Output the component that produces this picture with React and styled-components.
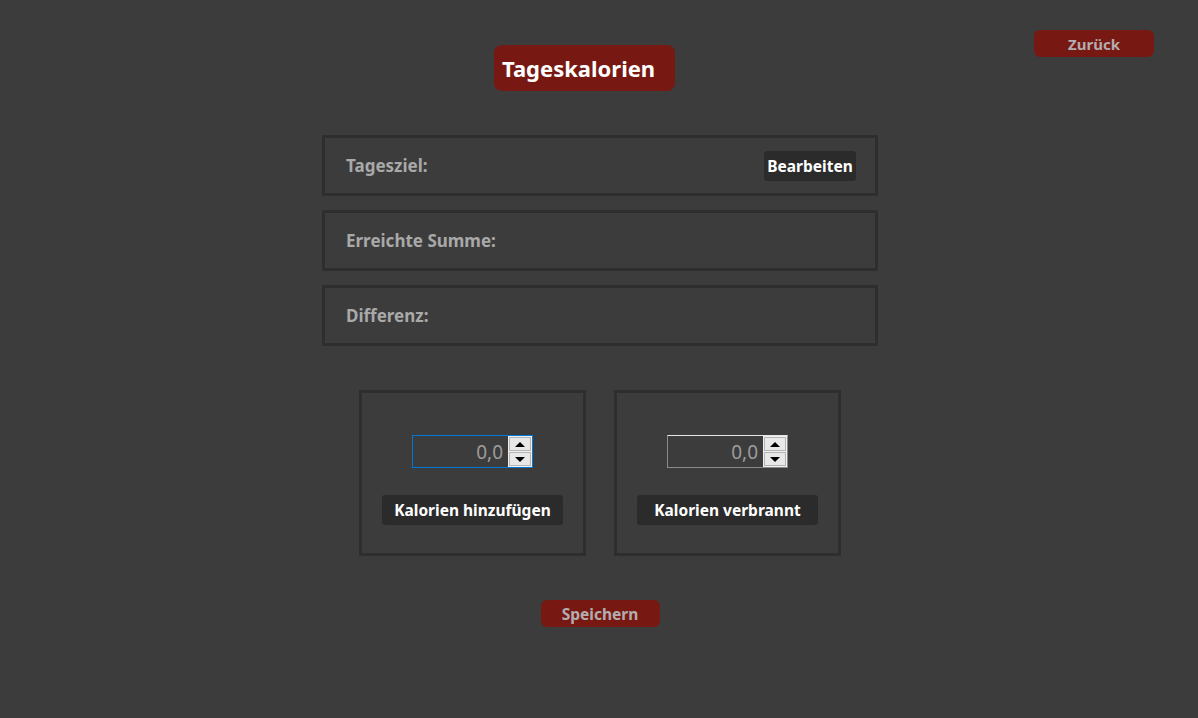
import React from 'react'
import styled, { createGlobalStyle } from 'styled-components'

const Global = createGlobalStyle`
  html, body {
    margin: 0;
    padding: 0;
    background: #3c3c3c;
  }
  body {
    font-family: "Noto Sans", "DejaVu Sans", sans-serif;
  }
`

const Page = styled.div`
  min-height: 718px;
  padding: 30px 0 0 2px;
  box-sizing: border-box;
  display: flex;
  flex-direction: column;
  align-items: center;
`

const Header = styled.div`
  width: 100%;
  display: grid;
  grid-template-columns: 1fr auto 1fr;
  align-items: start;
`

const Title = styled.h1`
  grid-column: 2;
  margin: 15px 31px 0 0;
  width: 181px;
  height: 46px;
  box-sizing: border-box;
  padding-left: 8px;
  display: flex;
  align-items: center;
  background: #771912;
  border-radius: 8px;
  color: #ffffff;
  font-size: 22px;
  font-weight: 700;
`

const RedButton = styled.button`
  width: 120px;
  height: 27px;
  border: none;
  border-radius: 6px;
  background: #771912;
  color: #b3acb0;
  font-family: inherit;
  font-size: 15px;
  font-weight: 700;
  padding: 0;
  cursor: pointer;
`

const BackButton = styled(RedButton)`
  grid-column: 3;
  justify-self: end;
  margin-right: 44px;
`

const InfoList = styled.div`
  margin-top: 44px;
  display: flex;
  flex-direction: column;
  gap: 14px;
`

const InfoBox = styled.div`
  width: 556px;
  height: 61px;
  box-sizing: border-box;
  border: 3px solid #2e2e2e;
  padding: 0 19px 0 21px;
  display: flex;
  align-items: center;
  justify-content: space-between;
`

const Label = styled.span`
  color: #a9a9a9;
  font-size: 17px;
  font-weight: 700;
`

const DarkButton = styled.button`
  height: 30px;
  width: ${p => p.$w}px;
  border: none;
  border-radius: 3px;
  background: #2b2b2b;
  color: #ffffff;
  font-family: inherit;
  font-size: 15.5px;
  font-weight: 700;
  padding: 0;
  cursor: pointer;
`

const Actions = styled.div`
  margin-top: 44px;
  display: flex;
  gap: 28px;
`

const ActionBox = styled.div`
  width: 227px;
  height: 166px;
  box-sizing: border-box;
  border: 3px solid #2e2e2e;
  padding-top: 42px;
  display: flex;
  flex-direction: column;
  align-items: center;
  gap: 27px;
`

const Spin = styled.div`
  width: 121px;
  height: 33px;
  box-sizing: border-box;
  display: flex;
  border: 1px solid ${p => (p.$focus ? '#0078d7' : '#8a8a8a')};
  border-top-color: ${p => (p.$focus ? '#0078d7' : '#e6e6e6')};
  background: #3c3c3c;
`

const Value = styled.input`
  flex: 1;
  min-width: 0;
  border: none;
  outline: none;
  background: transparent;
  text-align: right;
  padding: 0 5px 0 0;
  color: #9c9c9c;
  font-family: inherit;
  font-size: 19px;
  caret-color: #9c9c9c;
`

const Arrows = styled.div`
  width: 24px;
  display: flex;
  flex-direction: column;
  background: #f0f0f0;
  padding: 1px;
  gap: 1px;
  box-sizing: border-box;
`

const Arrow = styled.div`
  flex: 1;
  display: flex;
  align-items: center;
  justify-content: center;
  border: 1px solid #b4b4b4;
  background: #e8e8e8;
  &::after {
    content: '';
    border-left: 5px solid transparent;
    border-right: 5px solid transparent;
    ${p => (p.$up ? 'border-bottom: 5px solid #000;' : 'border-top: 5px solid #000;')}
  }
`

const SaveButton = styled(RedButton)`
  margin-top: 44px;
  width: 119px;
  font-size: 15.5px;
`

function NumberField({ focus }) {
  return (
    <Spin $focus={focus}>
      <Value defaultValue="0,0" />
      <Arrows>
        <Arrow $up />
        <Arrow />
      </Arrows>
    </Spin>
  )
}

export default function App() {
  return (
    <>
      <Global />
      <Page>
        <Header>
          <Title>Tageskalorien</Title>
          <BackButton>Zurück</BackButton>
        </Header>
        <InfoList>
          <InfoBox>
            <Label>Tagesziel:</Label>
            <DarkButton $w={92}>Bearbeiten</DarkButton>
          </InfoBox>
          <InfoBox>
            <Label>Erreichte Summe:</Label>
          </InfoBox>
          <InfoBox>
            <Label>Differenz:</Label>
          </InfoBox>
        </InfoList>
        <Actions>
          <ActionBox>
            <NumberField focus />
            <DarkButton $w={181}>Kalorien hinzufügen</DarkButton>
          </ActionBox>
          <ActionBox>
            <NumberField />
            <DarkButton $w={181}>Kalorien verbrannt</DarkButton>
          </ActionBox>
        </Actions>
        <SaveButton>Speichern</SaveButton>
      </Page>
    </>
  )
}
